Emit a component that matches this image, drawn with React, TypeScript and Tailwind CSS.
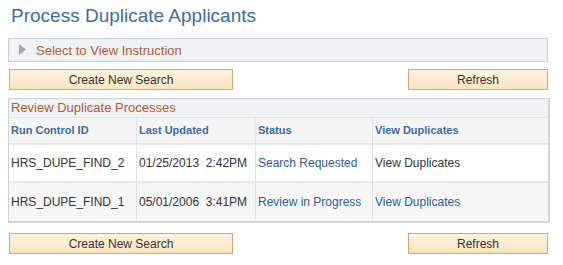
import React from "react";

const btn =
  "h-[21px] border border-[#d9a36e] bg-gradient-to-b from-[#fdf2e0] to-[#fbe5c0] text-[12px] text-[#333] flex items-center justify-center leading-none";

function ButtonRow() {
  return (
    <div className="flex justify-between w-[540px]">
      <div className={`${btn} w-[224px] ml-[1px]`}>Create New Search</div>
      <div className={`${btn} w-[140px]`}>Refresh</div>
    </div>
  );
}

const rows = [
  { id: "HRS_DUPE_FIND_2", date: "01/25/2013", time: "2:42PM", status: "Search Requested", viewLink: false, bg: "bg-white" },
  { id: "HRS_DUPE_FIND_1", date: "05/01/2006", time: "3:41PM", status: "Review in Progress", viewLink: true, bg: "bg-[#f7f7f7]" },
];

export default function App() {
  return (
    <div
      className="w-[563px] h-[265px] bg-white pl-[8px] pt-[5px]"
      style={{ fontFamily: '"Liberation Sans", Arial, sans-serif' }}
    >
      <div className="text-[19px] leading-[22px] text-[#3a6ea6] pl-[3px]">Process Duplicate Applicants</div>

      <div className="mt-[11px] w-[540px] h-[24px] border border-[#c9ced3] bg-[#eff3f5] flex items-center">
        <svg width="8" height="11" viewBox="0 0 8 11" className="ml-[10px] mt-[-2px]">
          <polygon points="0,0 7,5.5 0,11" fill="#a9a9a9" />
        </svg>
        <span className="ml-[9px] text-[13px] text-[#b8592c] mt-[2px]">Select to View Instruction</span>
      </div>

      <div className="mt-[7px]">
        <ButtonRow />
      </div>

      <div className="mt-[8px] w-[542px] border border-[#cdd1d5] border-r-2 border-b-2 border-r-[#d3d6d9] border-b-[#d3d6d9]">
        <div className="h-[19px] bg-[#eff3f5] text-[13px] text-[#b8592c] flex items-center pl-[2px] border-b border-[#e2e2e2]">
          Review Duplicate Processes
        </div>
        <div className="grid grid-cols-[127px_119px_117px_1fr] text-[12px]">
          {["Run Control ID", "Last Updated", "Status", "View Duplicates"].map((h, i) => (
            <div
              key={h}
              className={`h-[27px] bg-[#f5f5f5] border-b-2 border-[#e6e6e6] flex items-center font-bold text-[11px] text-[#3b6ba3] ${
                i === 0 ? "pl-[2px]" : "pl-[2px] border-l border-l-[#e0e0e0]"
              }`}
            >
              {h}
            </div>
          ))}
          {rows.map((r, ri) => (
            <React.Fragment key={r.id}>
              <div className={`h-[38px] ${r.bg} ${ri === 0 ? "border-b-2 border-[#e6e6e6]" : ""} flex items-center pl-[2px] text-[#333]`}>
                {r.id}
              </div>
              <div className={`h-[38px] ${r.bg} ${ri === 0 ? "border-b-2 border-[#e6e6e6]" : ""} border-l border-l-[#e0e0e0] flex items-center pl-[2px] text-[#333] whitespace-pre`}>
                {r.date + "  " + r.time}
              </div>
              <div className={`h-[38px] ${r.bg} ${ri === 0 ? "border-b-2 border-[#e6e6e6]" : ""} border-l border-l-[#e0e0e0] flex items-center pl-[2px] text-[#2b5c9e]`}>
                {r.status}
              </div>
              <div className={`h-[38px] ${r.bg} ${ri === 0 ? "border-b-2 border-[#e6e6e6]" : ""} border-l border-l-[#e0e0e0] flex items-center pl-[2px] ${r.viewLink ? "text-[#2b5c9e]" : "text-[#333]"}`}>
                View Duplicates
              </div>
            </React.Fragment>
          ))}
        </div>
      </div>

      <div className="mt-[10px]">
        <ButtonRow />
      </div>
    </div>
  );
}
